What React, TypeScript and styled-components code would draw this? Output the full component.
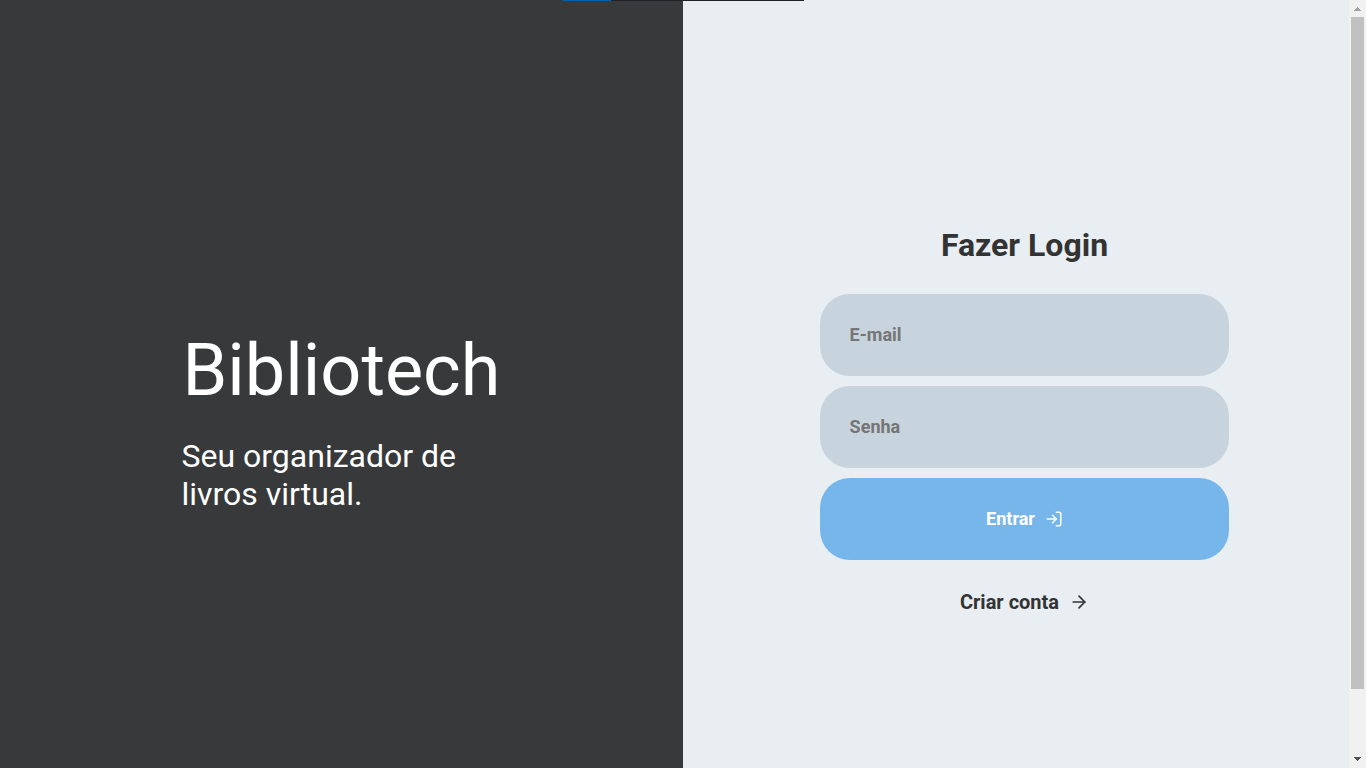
import React from 'react';
import styled, { createGlobalStyle } from 'styled-components';
import { FiArrowRight, FiLogIn } from 'react-icons/fi';

const GlobalStyle = createGlobalStyle`
  * { box-sizing: border-box; margin: 0; padding: 0; }
  body { overflow: hidden; font-family: Roboto, sans-serif; }
`;

const Page = styled.main`
  position: relative;
  display: grid;
  grid-template-columns: 683px 1fr 17px;
  width: 1366px;
  height: 768px;
  background: #e8eef2;
`;

const Brand = styled.section`
  background: #37393a;
  color: #fff;
  padding: 329px 181px 0 181.5px;
`;

const Title = styled.h1`
  font-size: 72px;
  font-weight: 400;
  line-height: 84px;
  margin: 0 0 24px 1px;
  white-space: nowrap;
`;

const Subtitle = styled.p`
  font-size: 32px;
  line-height: 38px;
  width: 300px;
`;

const LoginArea = styled.section`
  padding: 226px 0 0 137px;
`;

const Form = styled.form`
  display: flex;
  flex-direction: column;
  align-items: center;
  gap: 10px;
  width: 409px;
`;

const Heading = styled.h2`
  font-size: 32px;
  font-weight: 700;
  line-height: 38px;
  margin-bottom: 20px;
  color: #333;
`;

const Field = styled.input`
  width: 100%;
  height: 82px;
  padding: 0 30px 2px 29.6px;
  border: 0;
  border-radius: 30px;
  background: #c7d3dd;
  font: 700 18px Roboto, sans-serif;
  color: #333;
  outline: 0;
  &::placeholder { color: #757575; }
`;

const Submit = styled.button`
  display: flex;
  align-items: center;
  justify-content: center;
  gap: 10px;
  width: 100%;
  height: 82px;
  border: 0;
  border-radius: 30px;
  background: #77b6ea;
  color: #fff;
  font: 700 18px Roboto, sans-serif;
`;

const SubmitLabel = styled.span`
  padding-bottom: 2px;
`;

const SignUp = styled.a`
  display: flex;
  align-items: center;
  gap: 10px;
  margin-top: 20px;
  font-size: 20px;
  font-weight: 700;
  line-height: 24px;
  color: #333;
`;

const Scrollbar = styled.div`
  display: flex;
  flex-direction: column;
  align-items: center;
  background: #f1f1f1;
`;

const ScrollButton = styled.div`
  width: 17px;
  height: 17px;
  svg { display: block; }
`;

const Thumb = styled.div`
  width: 13px;
  height: 672px;
  margin-bottom: 62px;
  background: #c1c1c1;
`;

const TopLine = styled.div`
  position: absolute;
  top: 0;
  left: 563px;
  width: 241px;
  height: 1px;
  background: #202124;
`;

const TopProgress = styled.div`
  width: 48px;
  height: 1px;
  background: #0063b1;
`;

export default function App() {
  return (
    <>
      <GlobalStyle />
      <Page>
        <Brand>
          <Title>Bibliotech</Title>
          <Subtitle>Seu organizador de livros virtual.</Subtitle>
        </Brand>
        <LoginArea>
          <Form>
            <Heading>Fazer Login</Heading>
            <Field type="email" placeholder="E-mail" />
            <Field type="password" placeholder="Senha" />
            <Submit type="button">
              <SubmitLabel>Entrar</SubmitLabel>
              <FiLogIn size={18} />
            </Submit>
            <SignUp>
              Criar conta
              <FiArrowRight size={20} />
            </SignUp>
          </Form>
        </LoginArea>
        <Scrollbar>
          <ScrollButton>
            <svg width="17" height="17" shapeRendering="crispEdges" fill="#a3a3a3">
              <path d="M8 7h1v1h1v1h1v1h1v1H5v-1h1V9h1V8h1z" />
            </svg>
          </ScrollButton>
          <Thumb />
          <ScrollButton>
            <svg width="17" height="17" shapeRendering="crispEdges" fill="#505050">
              <path d="M5 6h7v1h-1v1h-1v1H9v1H8V9H7V8H6V7H5z" />
            </svg>
          </ScrollButton>
        </Scrollbar>
        <TopLine>
          <TopProgress />
        </TopLine>
      </Page>
    </>
  );
}
